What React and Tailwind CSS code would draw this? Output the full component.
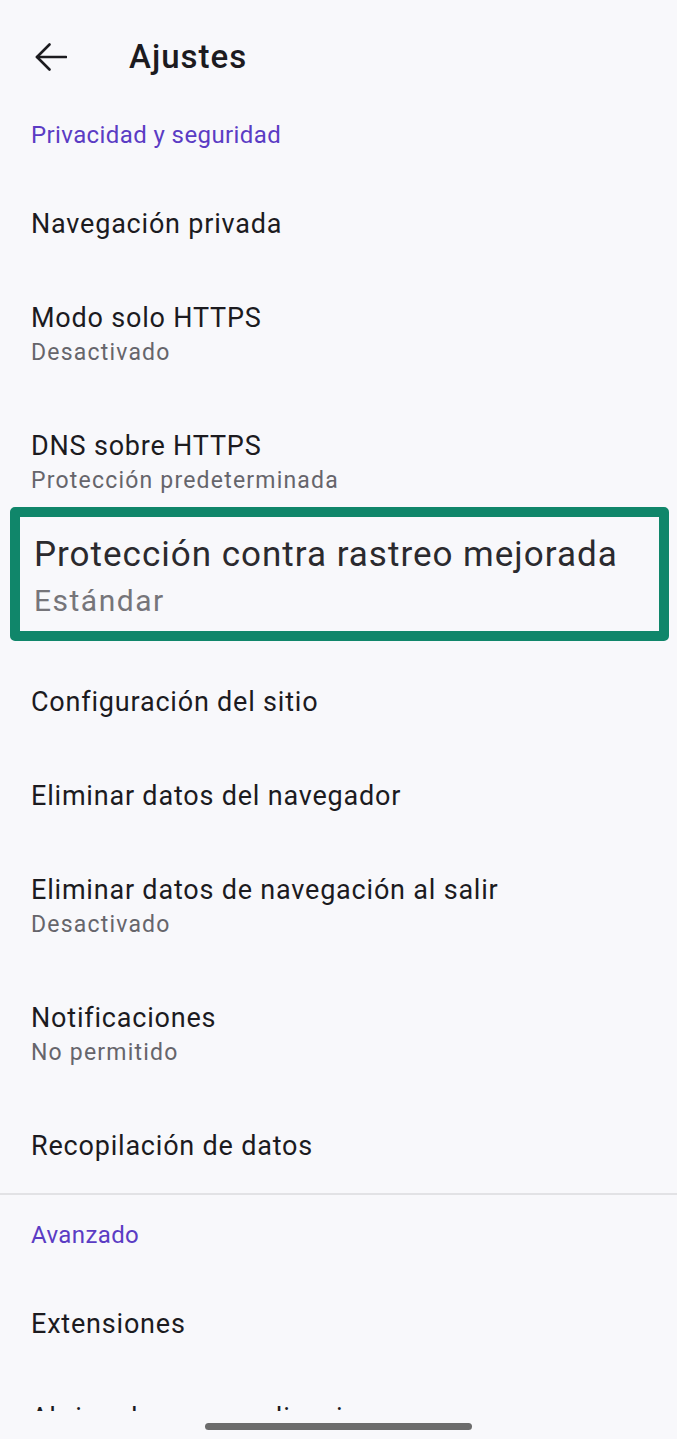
import React from "react";

const Item = ({ title, summary }) => (
  <div className="px-[31px] py-[29px]">
    <div className="text-[27px] leading-[36px] tracking-[0.8px] text-[#1c1b1f] whitespace-nowrap">{title}</div>
    {summary && (
      <div className="text-[23px] leading-[34px] tracking-[1.2px] text-[#66656b] whitespace-nowrap">{summary}</div>
    )}
  </div>
);

const SectionHeader = ({ children, top }) => (
  <div className={`px-[31px] pb-[26px] ${top}`}>
    <div className="text-[24px] leading-[32px] tracking-[0.4px] text-[#5b3cc4]">{children}</div>
  </div>
);

export default function App() {
  return (
    <div
      className="h-[1439px] w-full flex flex-col bg-[#f8f8fb] overflow-hidden"
      style={{ fontFamily: "Roboto, 'Liberation Sans', sans-serif" }}
    >
      <div className="h-[1411px] overflow-hidden">
        <header className="h-[114px] flex items-center pl-[35px]">
          <svg width="32" height="28" viewBox="0 0 32 28" fill="none" stroke="#1c1b1f" strokeWidth="2.6" strokeLinecap="round" strokeLinejoin="round">
            <path d="M31 14H2" />
            <path d="M14.5 1.5L2 14l12.5 12.5" />
          </svg>
          <h1 className="ml-[62px] text-[33px] leading-[40px] font-medium tracking-[1px] text-[#1c1b1f]">Ajustes</h1>
        </header>

        <SectionHeader top="pt-[5px]">Privacidad y seguridad</SectionHeader>
        <Item title="Navegación privada" />
        <Item title="Modo solo HTTPS" summary="Desactivado" />
        <Item title="DNS sobre HTTPS" summary="Protección predeterminada" />

        <div className="relative h-[128px]">
          <div className="absolute top-[-20px] left-[10px] w-[659px] h-[134px] border-[10px] border-[#10866a] rounded-[5px] bg-[#f8f8fb] pl-[14px] pt-[15px]">
            <div className="text-[35px] leading-[46px] tracking-[1px] text-[#2b2a2e] whitespace-nowrap">Protección contra rastreo mejorada</div>
            <div className="text-[30px] leading-[46px] tracking-[1.5px] text-[#76757a] whitespace-nowrap">Estándar</div>
          </div>
        </div>

        <Item title="Configuración del sitio" />
        <Item title="Eliminar datos del navegador" />
        <Item title="Eliminar datos de navegación al salir" summary="Desactivado" />
        <Item title="Notificaciones" summary="No permitido" />
        <Item title="Recopilación de datos" />

        <div className="h-[2px] bg-[#e2e2e5]" />

        <SectionHeader top="pt-[24px]">Avanzado</SectionHeader>
        <Item title="Extensiones" />
        <Item title="Abrir enlaces en aplicaciones" />
      </div>

      <div className="h-[28px] flex justify-center pt-[12px]">
        <div className="w-[267px] h-[7px] rounded-full bg-[#6c6c6c]" />
      </div>
    </div>
  );
}
